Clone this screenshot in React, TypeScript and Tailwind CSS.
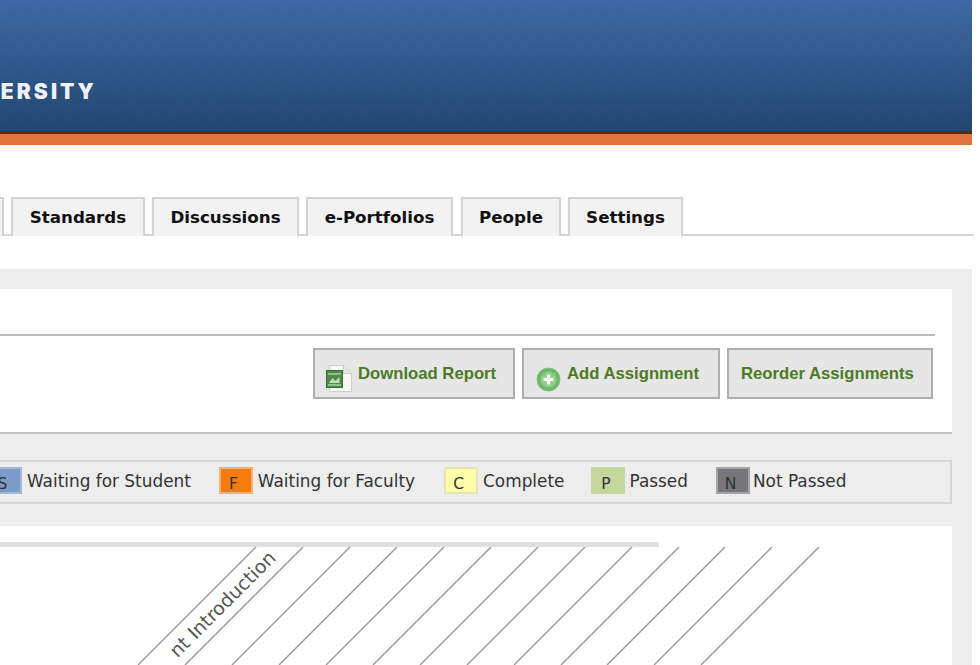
const dj = "font-['DejaVu_Sans',sans-serif]";

function Tab({ label, w, ml }: { label: string; w: string; ml?: string }) {
  return (
    <div className={`${w} ${ml ?? ""} h-[39px] -mb-px pt-[1px] flex items-center justify-center border-2 border-b-0 border-[#d2d2d2] bg-[#f2f2f2] text-[16.7px] font-bold text-[#111] ${dj}`}>
      {label}
    </div>
  );
}

function Chip({ letter, label, cls, ml, gap }: { letter: string; label: string; cls: string; ml: string; gap: string }) {
  return (
    <div className={`flex items-center ${ml}`}>
      <div className={`w-[34px] h-[27px] -mt-[2px] pr-[5px] flex items-end justify-center border-2 text-[15.5px] leading-[16px] text-[#333] ${cls}`}>{letter}</div>
      <span className={`${gap} text-[16.9px] text-[#333] whitespace-nowrap`}>{label}</span>
    </div>
  );
}

function ExcelIcon() {
  return (
    <svg width="26" height="27" viewBox="0 0 26 27" className="shrink-0">
      <path d="M3.5 .5h14l8 8v18H3.5z" fill="#f7f7f5" stroke="#c9d3c4" strokeWidth="1" />
      <path d="M17.5 .5v8h8" fill="#e6e8e2" stroke="#c9d3c4" strokeWidth="1" />
      <rect x=".5" y="5.5" width="16" height="17" fill="#4f8a4c" stroke="#3b6b3c" />
      <path d="M2 9h13M2 20h13" stroke="#a8cfa3" strokeWidth="1.5" />
      <path d="M3 18l3.5-5 3 3 4-4v6H3z" fill="#bfe0b8" />
    </svg>
  );
}

function PlusIcon() {
  return (
    <svg width="25" height="25" viewBox="0 0 25 25" className="shrink-0">
      <circle cx="12.5" cy="12.5" r="11.5" fill="#6fb86a" stroke="#7cc079" />
      <circle cx="12.5" cy="12.5" r="8" fill="#8fcb8a" />
      <path d="M12.5 7.5v10M7.5 12.5h10" stroke="#f2f8f0" strokeWidth="3.4" />
    </svg>
  );
}

function Btn({ w, children, pl }: { w: string; children: React.ReactNode; pl: string }) {
  return (
    <div className={`${w} ${pl} h-[51px] flex items-end pb-[5px] border-2 border-[#aeaeae] bg-[#e6e6e6] text-[16.7px] font-bold text-[#4d7a25] font-['Liberation_Sans',sans-serif] whitespace-nowrap`}>
      {children}
    </div>
  );
}

const tops = [256, 303, 350, 397, 444, 491, 538, 585, 632, 679, 725, 772, 819];

export default function App() {
  return (
    <div className="w-[980px] h-[665px] overflow-hidden bg-white">
      <div className="w-[972px] h-[131px] flex items-start [background-image:repeating-linear-gradient(45deg,rgba(255,255,255,.012)_0_1px,transparent_1px_3px),repeating-linear-gradient(-45deg,rgba(0,0,0,.014)_0_1px,transparent_1px_3px),linear-gradient(to_bottom,#3e69a5,#234670)]">
        <div className="w-[97px] mt-[79px] overflow-hidden flex justify-end">
          <span className="text-[21px] leading-[26px] font-black tracking-[3.1px] text-[#eef2f7] font-['Inter',sans-serif] whitespace-nowrap">ERSITY</span>
        </div>
      </div>
      <div className="w-[972px] h-[3px] bg-[#542b18]" />
      <div className="w-[972px] h-[11px] bg-[#e2753d]" />

      <div className="w-[974px] h-[124px] pt-[52px]">
        <div className="h-[39px] flex gap-[7px] border-b-2 border-[#d6d6d6]">
          <div className="w-[4px] h-[39px] -mb-px border-r-2 border-t-2 border-[#d2d2d2] bg-[#f2f2f2]" />
          <Tab label="Standards" w="w-[134px]" />
          <Tab label="Discussions" w="w-[147px]" />
          <Tab label="e-Portfolios" w="w-[147px]" />
          <Tab label="People" w="w-[100px]" ml="ml-[1px]" />
          <Tab label="Settings" w="w-[115px]" />
        </div>
      </div>

      <div className="w-[972px] h-[396px] bg-[#ededed] pt-[20px] pr-[20px]">
        <div className="h-[145px] bg-white border-b-2 border-[#c4c4c4] pt-[45px]">
          <div className="w-[935px] h-[2px] bg-[#bcbcbc]" />
          <div className="w-[933px] mt-[12px] flex justify-end gap-[7px]">
            <Btn w="w-[202px]" pl="pl-[11px]">
              <ExcelIcon />
              <span className="ml-[6px] mb-[6px]">Download Report</span>
            </Btn>
            <Btn w="w-[198px]" pl="pl-[12px]">
              <PlusIcon />
              <span className="ml-[6px] mb-[6px]">Add Assignment</span>
            </Btn>
            <Btn w="w-[206px]" pl="pl-[12px]">
              <span className="mb-[6px]">Reorder Assignments</span>
            </Btn>
          </div>
        </div>

        <div className={`mt-[26px] h-[44px] border-2 border-l-0 border-[#d6d6d6] flex items-center -ml-[12px] ${dj}`}>
          <Chip letter="S" label="Waiting for Student" cls="bg-[#7b9bc8] border-[#a3b8d6]" ml="ml-0" gap="ml-[5px]" />
          <Chip letter="F" label="Waiting for Faculty" cls="bg-[#f57c0a] border-[#f4b075]" ml="ml-[28px]" gap="ml-[5px]" />
          <Chip letter="C" label="Complete" cls="bg-[#fdfdaa] border-[#e4e4b4]" ml="ml-[29px]" gap="ml-[5px]" />
          <Chip letter="P" label="Passed" cls="bg-[#c5d79c] border-[#c5d79c]" ml="ml-[27px]" gap="ml-[4px]" />
          <Chip letter="N" label="Not Passed" cls="bg-[#77767a] border-[#a4a4a6]" ml="ml-[28px]" gap="ml-[3px]" />
        </div>

        <div className="mt-[22px] h-[139px] bg-white pt-[16px]">
          <div className="w-[659px] h-[5px] bg-[#dfdfdf]" />
          <svg width="860" height="118" viewBox="0 0 860 118" className="block">
            {tops.map((x) => (
              <line key={x} x1={x} y1={0} x2={x - 118} y2={118} stroke="#999" strokeWidth="1.4" />
            ))}
            <text
              transform="translate(277 12) rotate(-45)"
              textAnchor="end"
              fontFamily="DejaVu Sans, sans-serif"
              fontSize="19"
              fill="#555"
            >
              nt Introduction
            </text>
          </svg>
        </div>
      </div>
    </div>
  );
}
